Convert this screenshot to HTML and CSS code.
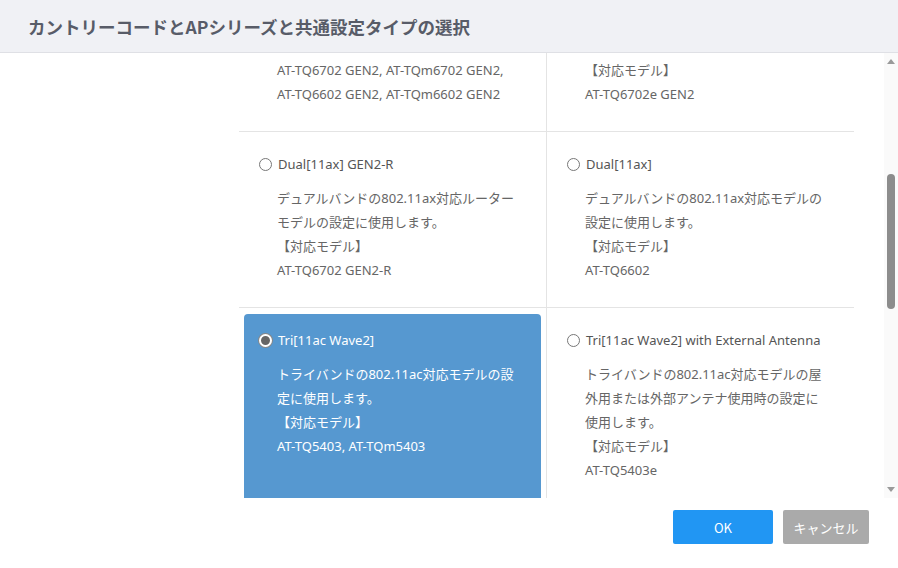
FILE: index.html
```html
<!DOCTYPE html>
<html lang="ja">
<head>
    <meta charset="UTF-8">
    <meta name="viewport" content="width=device-width, initial-scale=1.0">
    <title>カントリーコードとAPシリーズと共通設定タイプの選択</title>
    <link rel="stylesheet" href="styles.css">
</head>
<body>
    <div class="dialog">
        <header class="dialog-head">
            <h1>カントリーコードとAPシリーズと共通設定タイプの選択</h1>
        </header>

        <div class="dialog-body">
            <div class="list">
                <div class="types">
                    <!-- row 1 (scrolled partly out of view) -->
                    <div class="type">
                        <div class="option">
                            <div class="option-title"><span class="radio"></span>Dual[11ax] GEN2</div>
                            <div class="option-desc">
                                <p>デュアルバンドの802.11ax対応モデルの設定に使用します。</p>
                                <p>【対応モデル】</p>
                                <p>AT-TQ6702 GEN2, AT-TQm6702 GEN2,<br>AT-TQ6602 GEN2, AT-TQm6602 GEN2</p>
                            </div>
                        </div>
                    </div>
                    <div class="type">
                        <div class="option">
                            <div class="option-title"><span class="radio"></span>Dual[11ax] GEN2 with External Antenna</div>
                            <div class="option-desc">
                                <p>デュアルバンドの802.11ax対応モデルの屋外用または外部アンテナ使用時の設定に使用します。</p>
                                <p>【対応モデル】</p>
                                <p>AT-TQ6702e GEN2</p>
                            </div>
                        </div>
                    </div>

                    <!-- row 2 -->
                    <div class="type">
                        <div class="option">
                            <div class="option-title"><span class="radio"></span>Dual[11ax] GEN2-R</div>
                            <div class="option-desc">
                                <p>デュアルバンドの802.11ax対応ルーターモデルの設定に使用します。</p>
                                <p>【対応モデル】</p>
                                <p>AT-TQ6702 GEN2-R</p>
                            </div>
                        </div>
                    </div>
                    <div class="type">
                        <div class="option">
                            <div class="option-title"><span class="radio"></span>Dual[11ax]</div>
                            <div class="option-desc">
                                <p>デュアルバンドの802.11ax対応モデルの設定に使用します。</p>
                                <p>【対応モデル】</p>
                                <p>AT-TQ6602</p>
                            </div>
                        </div>
                    </div>

                    <!-- row 3 -->
                    <div class="type">
                        <div class="option selected">
                            <div class="option-title"><span class="radio"></span>Tri[11ac Wave2]</div>
                            <div class="option-desc">
                                <p>トライバンドの802.11ac対応モデルの設定に使用します。</p>
                                <p>【対応モデル】</p>
                                <p>AT-TQ5403, AT-TQm5403</p>
                            </div>
                        </div>
                    </div>
                    <div class="type">
                        <div class="option">
                            <div class="option-title"><span class="radio"></span>Tri[11ac Wave2] with External Antenna</div>
                            <div class="option-desc">
                                <p>トライバンドの802.11ac対応モデルの屋外用または外部アンテナ使用時の設定に使用します。</p>
                                <p>【対応モデル】</p>
                                <p>AT-TQ5403e</p>
                            </div>
                        </div>
                    </div>
                </div>
            </div>

            <!-- scrollbar -->
            <div class="scrollbar">
                <div class="sb-arrow">
                    <svg width="8" height="5" viewBox="0 0 8 5"><path d="M0 5 L4 0 L8 5 Z" fill="#9a9a9a"/></svg>
                </div>
                <div class="sb-track">
                    <div class="sb-thumb"></div>
                </div>
                <div class="sb-arrow">
                    <svg width="8" height="5" viewBox="0 0 8 5"><path d="M0 0 L8 0 L4 5 Z" fill="#9a9a9a"/></svg>
                </div>
            </div>
        </div>

        <footer class="dialog-foot">
            <button class="btn btn-ok">OK</button>
            <button class="btn btn-cancel">キャンセル</button>
        </footer>
    </div>
</body>
</html>
```

FILE: styles.css
```css
html, body {
    margin: 0;
    padding: 0;
    height: 100%;
}

body {
    font-family: "Noto Sans", "Noto Sans CJK JP", sans-serif;
    background-color: #fff;
    color: #555;
}

.dialog {
    display: flex;
    flex-direction: column;
    height: 568px;
}

.dialog-head {
    height: 52px;
    background-color: #f0f1f5;
    border-bottom: 1px solid #dfe0e5;
    display: flex;
    align-items: center;
    padding-left: 28px;
}

.dialog-head h1 {
    margin: 0;
    font-size: 17.5px;
    font-weight: bold;
    color: #585c68;
    font-family: "Noto Sans CJK JP", sans-serif;
}

/* scroll area */
.dialog-body {
    height: 445px;
    display: flex;
}

.list {
    flex: 1;
    overflow: hidden;
    padding-left: 239px;
}

.types {
    width: 615px;
    display: grid;
    grid-template-columns: 308px 307px;
    margin-top: -121px;
}

.type {
    display: flex;
    flex-direction: column;
    padding: 6px 5px;
    border-bottom: 1px solid #e4e4e4;
}

.type:nth-child(odd) {
    border-right: 1px solid #e4e4e4;
}

.option {
    flex: 1;
    padding: 16px 20px 19px 15px;
    border-radius: 4px;
    font-size: 13px;
    color: #666;
}

.option-title {
    display: flex;
    align-items: center;
    line-height: 20px;
    color: #555;
}

.radio {
    width: 11px;
    height: 11px;
    border: 1px solid #777;
    border-radius: 50%;
    background: #fff;
    margin-right: 6px;
    flex: none;
}

.option-desc {
    margin-top: 12px;
    padding-left: 18px;
    line-height: 24px;
}

.option-desc p {
    margin: 0;
}

.option.selected {
    background-color: #5698d0;
    color: #fff;
}

.option.selected .option-title {
    color: #fff;
}

.option.selected .radio {
    background: #666;
    border: 2px solid #fff;
    width: 9px;
    height: 9px;
    box-shadow: 0 0 0 1px #888;
}

/* fake scrollbar */
.scrollbar {
    width: 14px;
    background-color: #fafafa;
    display: flex;
    flex-direction: column;
}

.sb-arrow {
    height: 17px;
    display: flex;
    align-items: center;
    justify-content: center;
}

.sb-track {
    flex: 1;
}

.sb-thumb {
    width: 8px;
    height: 135px;
    margin: 104px 0 0 3px;
    border-radius: 4px;
    background-color: #8c8c8c;
}

/* footer */
.dialog-foot {
    flex: 1;
    display: flex;
    justify-content: flex-end;
    align-items: flex-start;
    padding: 12px 29px 0 0;
    gap: 10px;
}

.btn {
    height: 34px;
    border: none;
    border-radius: 2px;
    color: #fff;
    font-size: 13px;
    font-family: "Noto Sans CJK JP", sans-serif;
    cursor: pointer;
}

.btn-ok {
    width: 100px;
    background-color: #2196f3;
}

.btn-cancel {
    width: 86px;
    background-color: #aaa;
}
```
